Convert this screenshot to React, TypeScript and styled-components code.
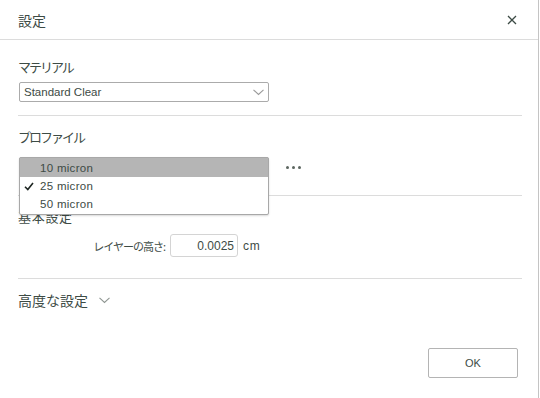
import React from 'react'
import styled, { createGlobalStyle } from 'styled-components'

const Global = createGlobalStyle`
  html, body {
    margin: 0;
    padding: 0;
    background: #fff;
  }
  body {
    font-family: "Liberation Sans", "Noto Sans CJK JP", sans-serif;
    color: #3d4b45;
  }
`

const Dialog = styled.div`
  width: 538px;
  height: 398px;
  border-right: 1px solid #c4c4c4;
  display: flex;
  flex-direction: column;
`

const Header = styled.div`
  height: 39px;
  border-bottom: 1px solid #dcdcdc;
  padding: 0 20px 0 18px;
  display: flex;
  align-items: center;
  justify-content: space-between;
`

const Title = styled.div`
  font-size: 14px;
  font-family: "Noto Sans CJK JP", sans-serif;
`

const CloseButton = styled.button`
  border: 0;
  background: none;
  padding: 0;
  width: 12px;
  height: 12px;
  display: flex;
  align-items: center;
  justify-content: center;
  cursor: pointer;
`

const Body = styled.div`
  padding: 0 16px 0 18px;
  flex: 1;
  display: flex;
  flex-direction: column;
`

const Section = styled.div<{ $top?: number; $bottom: number; $last?: boolean }>`
  padding-top: ${p => p.$top ?? 11}px;
  padding-bottom: ${p => p.$bottom}px;
  border-bottom: ${p => (p.$last ? 'none' : '1px solid #dcdcdc')};
`

const Label = styled.div<{ $gap?: number; $tight?: boolean }>`
  font-family: "Noto Sans CJK JP", sans-serif;
  font-size: 13px;
  line-height: 20px;
  letter-spacing: ${p => (p.$tight ? '-2px' : '0.7px')};
  margin-bottom: ${p => p.$gap ?? 10}px;
`

const Row = styled.div`
  display: flex;
  align-items: center;
`

const SelectBox = styled.div`
  width: 240px;
  height: 18px;
  margin-left: 1px;
  border: 1px solid #ababab;
  border-radius: 2px;
  display: flex;
  align-items: center;
  justify-content: space-between;
  padding: 0 4px;
  font-size: 11.5px;
  position: relative;
`

const Value = styled.span<{ $hidden?: boolean }>`
  visibility: ${p => (p.$hidden ? 'hidden' : 'visible')};
`

const Chevron = ({ color = '#9a9a9a' }: { color?: string }) => (
  <svg width="11" height="7" viewBox="0 0 11 7">
    <path d="M0.5 0.8 L5.5 5.5 L10.5 0.8" fill="none" stroke={color} strokeWidth="1.1" />
  </svg>
)

const Menu = styled.div`
  position: absolute;
  left: -1px;
  top: -1px;
  width: 248px;
  background: #fff;
  border: 1px solid #a8a8a8;
  border-radius: 2px;
  box-shadow: 0 1px 2px rgba(0, 0, 0, 0.15);
  padding-bottom: 1px;
  z-index: 2;
`

const MenuItem = styled.div<{ $hover?: boolean }>`
  height: 18px;
  display: flex;
  align-items: center;
  font-size: 11.5px;
  letter-spacing: 0.3px;
  background: ${p => (p.$hover ? '#b5b5b5' : 'transparent')};
  padding-left: 4px;
  &:first-child {
    height: 19px;
  }
`

const Check = styled.span`
  width: 16px;
  display: inline-flex;
  align-items: center;
`

const More = styled.div`
  margin-left: 17px;
  display: flex;
  gap: 3px;
  padding-top: 1px;
  span {
    width: 3px;
    height: 3px;
    border-radius: 50%;
    background: #5c6660;
  }
`

const FieldLabel = styled.div`
  font-family: "Noto Sans CJK JP", sans-serif;
  font-size: 11px;
  width: 147px;
  text-align: right;
  letter-spacing: -1px;
`

const NumberInput = styled.input`
  width: 60px;
  height: 21px;
  margin-left: 5px;
  border: 1px solid #d4d4d4;
  border-radius: 3px;
  padding: 0 3px;
  text-align: right;
  font-family: "Liberation Sans", sans-serif;
  font-size: 12px;
  color: #3d4b45;
  box-sizing: content-box;
  outline: none;
`

const Unit = styled.span`
  margin-left: 5px;
  font-size: 12px;
  letter-spacing: 0.8px;
`

const Toggle = styled.div`
  display: flex;
  align-items: center;
  gap: 11px;
  font-family: "Noto Sans CJK JP", sans-serif;
  font-size: 14px;
  line-height: 20px;
`

const Footer = styled.div`
  display: flex;
  justify-content: flex-end;
  padding: 0 20px 20px 0;
`

const Button = styled.button`
  width: 90px;
  height: 30px;
  background: #fff;
  border: 1px solid #b4b4b4;
  border-radius: 2px;
  font-family: "Liberation Sans", sans-serif;
  font-size: 11px;
  color: #3d4b45;
  cursor: pointer;
`

const profiles = ['10 micron', '25 micron', '50 micron']

export default function App() {
  return (
    <>
      <Global />
      <Dialog>
        <Header>
          <Title>設定</Title>
          <CloseButton aria-label="close">
            <svg width="10" height="10" viewBox="0 0 10 10">
              <path d="M1 1 L9 9 M9 1 L1 9" stroke="#3d4b45" strokeWidth="1.3" />
            </svg>
          </CloseButton>
        </Header>
        <Body>
          <Section $top={17} $bottom={13}>
            <Label $tight $gap={5}>マテリアル</Label>
            <SelectBox>
              <Value>Standard Clear</Value>
              <Chevron />
            </SelectBox>
          </Section>
          <Section $bottom={18}>
            <Label $tight>プロファイル</Label>
            <Row>
              <SelectBox>
                <Value $hidden>25 micron</Value>
                <Chevron />
                <Menu>
                  {profiles.map((name, i) => (
                    <MenuItem key={name} $hover={i === 0}>
                      <Check>
                        {i === 1 && (
                          <svg width="10" height="9" viewBox="0 0 10 9">
                            <path d="M1 4.8 L3.8 7.6 L9 1" fill="none" stroke="#1e2622" strokeWidth="1.6" />
                          </svg>
                        )}
                      </Check>
                      {name}
                    </MenuItem>
                  ))}
                </Menu>
              </SelectBox>
              <More>
                <span />
                <span />
                <span />
              </More>
            </Row>
          </Section>
          <Section $bottom={21}>
            <Label $gap={7}>基本設定</Label>
            <Row>
              <FieldLabel>レイヤーの高さ:</FieldLabel>
              <NumberInput defaultValue="0.0025" />
              <Unit>cm</Unit>
            </Row>
          </Section>
          <Section $bottom={0} $last>
            <Toggle>
              高度な設定
              <Chevron color="#8f9692" />
            </Toggle>
          </Section>
        </Body>
        <Footer>
          <Button>OK</Button>
        </Footer>
      </Dialog>
    </>
  )
}
